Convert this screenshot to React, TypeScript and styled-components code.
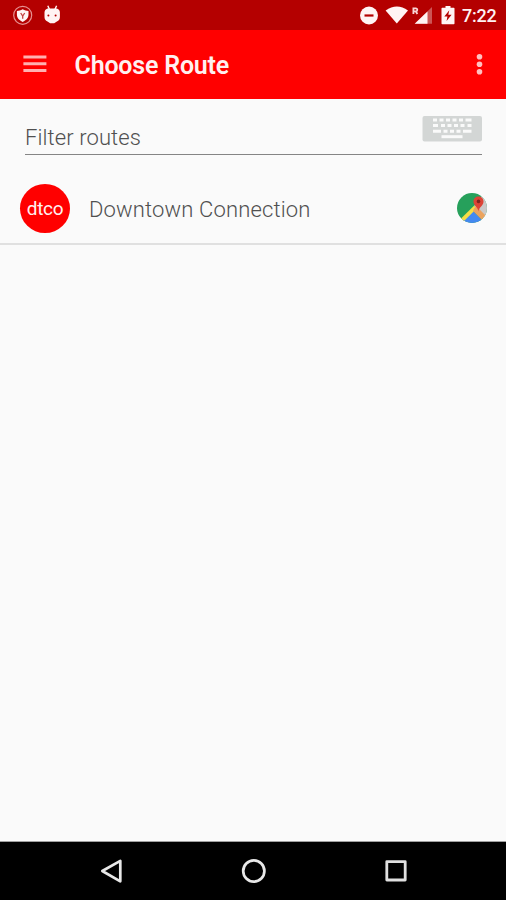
import React from 'react';
import styled, { createGlobalStyle } from 'styled-components';

const GlobalStyle = createGlobalStyle`
  * { box-sizing: border-box; }
  body { margin: 0; background: #fafafa; font-family: Roboto, sans-serif; }
  svg { display: block; flex: none; }
`;

const Screen = styled.div`
  width: 506px;
  height: 900px;
  display: flex;
  flex-direction: column;
  background: #fafafa;
  overflow: hidden;
`;

const StatusBar = styled.header`
  height: 30px;
  flex: none;
  display: flex;
  justify-content: space-between;
  background: #b40000;
`;

const StatusGroup = styled.div`
  display: flex;
  height: 30px;
`;

const Clock = styled.time`
  width: 44px;
  padding-top: 1px;
  font-size: 18px;
  font-weight: 500;
  line-height: 30px;
  letter-spacing: -0.2px;
  color: #fff2f2;
`;

const AppBar = styled.div`
  height: 68.5px;
  flex: none;
  display: flex;
  align-items: center;
  padding: 0 19px 0 23px;
  background: #ff0000;
`;

const Title = styled.h1`
  flex: 1;
  margin: 4px 0 0 27.5px;
  font-size: 25px;
  font-weight: 600;
  line-height: 30px;
  letter-spacing: -0.2px;
  color: #fff0f0;
`;

const IconButton = styled.button`
  border: 0;
  padding: 0;
  background: none;
  display: flex;
`;

const FilterField = styled.label`
  height: 38.5px;
  flex: none;
  margin: 17.5px 24px 0 25px;
  display: flex;
  justify-content: space-between;
  border-bottom: 1.5px solid #858585;
`;

const FilterText = styled.span`
  margin-top: 8px;
  font-size: 22px;
  line-height: 28px;
  font-weight: 350;
  letter-spacing: 0.1px;
  color: #505050;
`;

const RouteRow = styled.div`
  height: 90px;
  flex: none;
  display: flex;
  align-items: center;
  padding: 19px 19px 0 20px;
  border-bottom: 2px solid #e0e0e0;
`;

const RouteBadge = styled.div`
  width: 50px;
  height: 49px;
  border-radius: 50%;
  background: #ff0000;
  color: #fff0f0;
  font-size: 19px;
  line-height: 50px;
  letter-spacing: -0.3px;
  text-align: center;
`;

const RouteName = styled.span`
  flex: 1;
  margin: 3px 0 0 19px;
  font-size: 22px;
  line-height: 28px;
  font-weight: 350;
  letter-spacing: 0.15px;
  color: #505050;
`;

const Content = styled.main`
  flex: 1;
  display: flex;
  flex-direction: column;
`;

const NavBar = styled.nav`
  height: 58px;
  flex: none;
  display: flex;
  justify-content: space-between;
  align-items: center;
  padding: 0 98px 0 99px;
  background: #000;
  box-shadow: 0 -1px 0 #a0a0a0;
`;

const NotificationIcons = () => (
  <svg width="70" height="30" viewBox="0 0 70 30">
    <circle cx="22.7" cy="15.3" r="9" fill="none" stroke="#e69090" strokeWidth="1.2" />
    <path d="M22.7 9.2c2 1.3 3.8 1.7 5.8 1.7v3.6c0 3.6-2.4 5.7-5.8 7.4-3.4-1.7-5.8-3.8-5.8-7.4v-3.6c2 0 3.8-.4 5.8-1.7z" fill="#fff4f4" />
    <path d="m20.7 13 2 3 2-3M22.7 16v2.8" fill="none" stroke="#c54444" strokeWidth="1.3" />
    <path d="m47.8 5.8 1.6 3.5M56.6 5.8 55 9.3" stroke="#fff4f4" strokeWidth="1.4" />
    <path d="M44.5 12.5q0-3 3-4h9.4q3 1 3 4V17q0 3.2-3 4.4l-2.7 1.8h-4l-2.7-1.8q-3-1.2-3-4.4z" fill="#fff4f4" />
    <circle cx="48.4" cy="15.4" r="1" fill="#b40000" />
    <circle cx="55.6" cy="15.4" r="1" fill="#b40000" />
  </svg>
);

const SystemIcons = () => (
  <svg width="104" height="30" viewBox="358 0 104 30">
    <circle cx="369" cy="15.5" r="9" fill="#fff4f4" />
    <path d="M364.5 15.5h9" stroke="#b40000" strokeWidth="2.2" />
    <path d="M385.6 10.5Q397 2.5 408 10.5L396.8 23.6z" fill="#fff4f4" />
    <path d="M432 7v16.8h-17.3z" fill="#cc5555" />
    <path d="M427.5 11.5v12.3h-12.8z" fill="#fff4f4" />
    <path d="M413.4 14V8.3h2.6q1.3.1 1.3 1.5t-1.3 1.5h-2.3m2 0 1.7 2.6" fill="none" stroke="#f9d6d6" strokeWidth="1.8" />
    <path d="M445.5 6h5v1.8h3.3q.7 0 .7.8v14.8q0 .8-.8.8h-11.4q-.8 0-.8-.8V8.6q0-.8.7-.8h3.3z" fill="#fff4f4" />
    <path d="m449.3 10.3-5 6.2h3.1l-.8 4.5 5-6.3h-3.3z" fill="#b40000" />
  </svg>
);

const MenuIcon = () => (
  <svg width="24" height="24" viewBox="0 0 24 24" stroke="#ffb0b0" strokeWidth="3">
    <path d="M.4 5h23M.4 11.8h23M.4 18.6h23" />
  </svg>
);

const MoreIcon = () => (
  <svg width="16" height="24" viewBox="0 0 16 24" fill="#ffc0c0">
    <circle cx="8.5" cy="4.8" r="2.8" />
    <circle cx="8.5" cy="12.3" r="2.8" />
    <circle cx="8.5" cy="19.8" r="2.8" />
  </svg>
);

const KeyboardIcon = () => (
  <svg width="60" height="26" viewBox="0 0 60 26">
    <rect x=".5" y="0" width="59.5" height="25.5" rx="2" fill="#d3d6d5" />
    <g fill="none" stroke="#fafafa" strokeWidth="3">
      <path d="M11 4h4M17.5 4h4M24 4h4M30.5 4h4M37 4h4M43.5 4h6" />
      <path d="M11 9.6h5M19 9.6h4M25.5 9.6h4M32 9.6h4M38.5 9.6h4M45.5 9.6h4" />
      <path d="M11 15.2h8M21.5 15.2h4M28 15.2h4M34.5 15.2h4M41 15.2h8.5" />
      <path d="M19.5 20.7h21" />
    </g>
  </svg>
);

const MapsIcon = () => (
  <svg width="30" height="30" viewBox="0 0 30 30">
    <defs>
      <clipPath id="mapDisc"><circle cx="15" cy="15" r="15" /></clipPath>
    </defs>
    <g clipPath="url(#mapDisc)">
      <path d="M0 0h30v30H0z" fill="#26a05b" />
      <path d="M17 13 25 2h5v28z" fill="#cbc9c9" />
      <path d="M15.5 17.5 5 28v5h21v-5z" fill="#4489f0" />
      <path d="M2.5 27 17 12.8l2.7 2.7L5 30z" fill="#f5dd45" />
      <path d="m17 15.5 2.2-2.5L30 24l-4 4-10-10z" fill="#eba35e" />
    </g>
    <path d="M21.5 18.5c-.3-4.3-5-5.6-5-10 0-3 2.2-5 5-5s5 2 5 5c0 4.4-4.7 5.7-5 10z" fill="#dc4336" />
    <circle cx="21.5" cy="8.4" r="1.8" fill="#7d231e" />
  </svg>
);

const BackIcon = () => (
  <svg width="26" height="26" viewBox="0 0 26 26" fill="none" stroke="#e8e8e8" strokeWidth="2.7" strokeLinejoin="round">
    <path d="M3.3 13 21.3 2.9v20.4z" />
  </svg>
);

const HomeIcon = () => (
  <svg width="26" height="26" viewBox="0 0 26 26" fill="none" stroke="#e8e8e8" strokeWidth="2.7">
    <circle cx="12.8" cy="13" r="10.6" />
  </svg>
);

const RecentsIcon = () => (
  <svg width="26" height="26" viewBox="0 0 26 26" fill="none" stroke="#e0e0e0" strokeWidth="2.8" strokeLinejoin="round">
    <rect x="4.8" y="3.6" width="18.4" height="18.4" />
  </svg>
);

const routes = [{ code: 'dtco', name: 'Downtown Connection' }];

export default function App() {
  return (
    <Screen>
      <GlobalStyle />
      <StatusBar>
        <StatusGroup><NotificationIcons /></StatusGroup>
        <StatusGroup>
          <SystemIcons />
          <Clock>7:22</Clock>
        </StatusGroup>
      </StatusBar>
      <AppBar>
        <IconButton aria-label="Menu"><MenuIcon /></IconButton>
        <Title>Choose Route</Title>
        <IconButton aria-label="More"><MoreIcon /></IconButton>
      </AppBar>
      <Content>
        <FilterField>
          <FilterText>Filter routes</FilterText>
          <KeyboardIcon />
        </FilterField>
        {routes.map((route) => (
          <RouteRow key={route.code}>
            <RouteBadge>{route.code}</RouteBadge>
            <RouteName>{route.name}</RouteName>
            <IconButton aria-label="Map"><MapsIcon /></IconButton>
          </RouteRow>
        ))}
      </Content>
      <NavBar>
        <IconButton aria-label="Back"><BackIcon /></IconButton>
        <IconButton aria-label="Home"><HomeIcon /></IconButton>
        <IconButton aria-label="Recents"><RecentsIcon /></IconButton>
      </NavBar>
    </Screen>
  );
}
